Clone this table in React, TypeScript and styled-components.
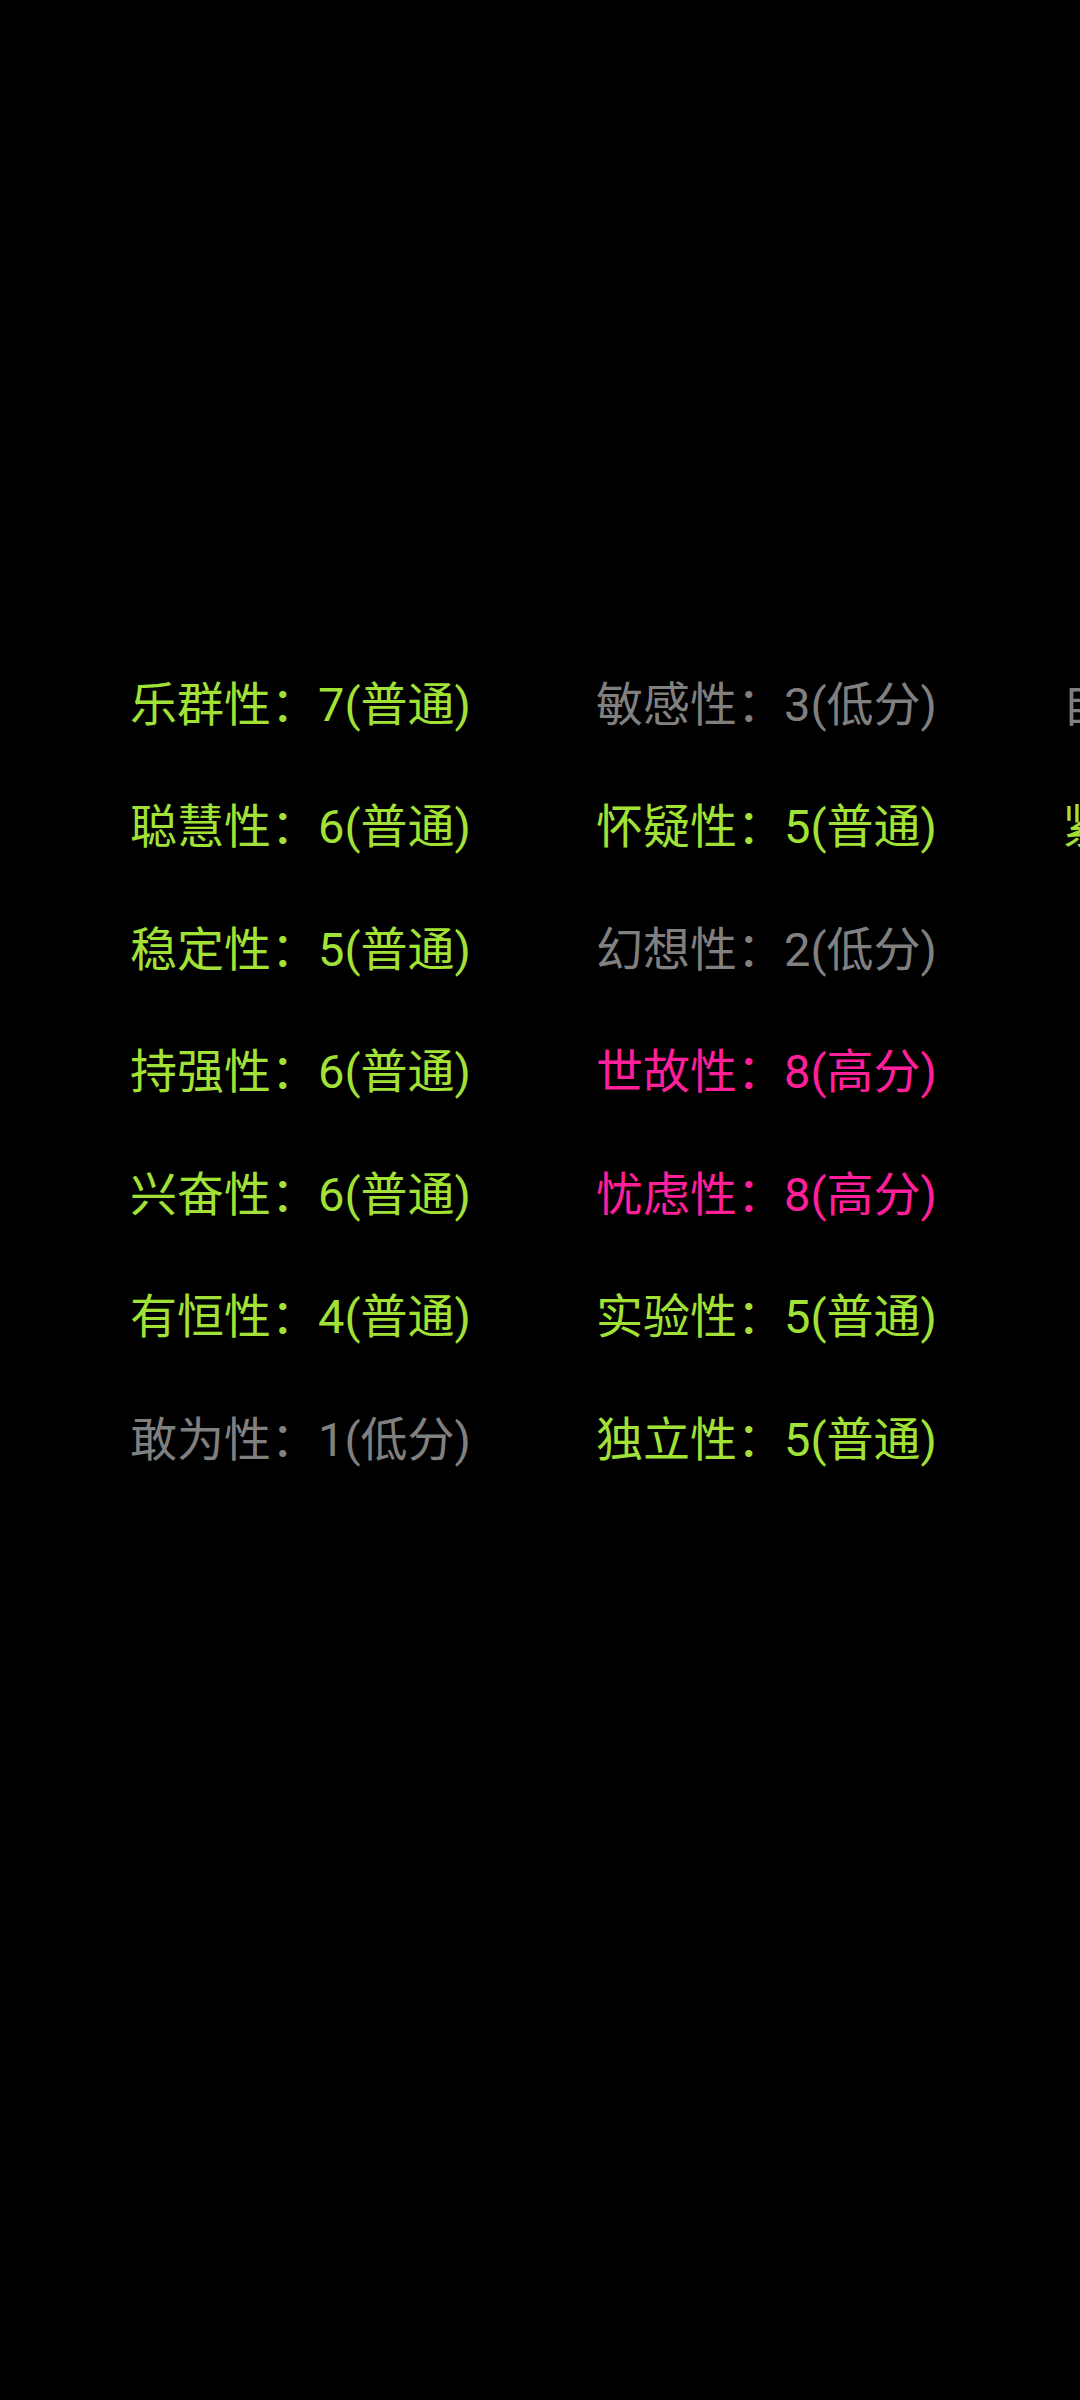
import React from "react";
import styled, { createGlobalStyle } from "styled-components";

const Global = createGlobalStyle`
  html, body {
    margin: 0;
    padding: 0;
    background: #000;
    overflow: hidden;
  }
  body {
    width: 1080px;
    height: 2400px;
  }
`;

type Level = "low" | "mid" | "high";

const colors: Record<Level, string> = {
  low: "#808080",
  mid: "#a2e236",
  high: "#ff1f9a",
};

const labels: Record<Level, string> = {
  low: "低分",
  mid: "普通",
  high: "高分",
};

const Page = styled.div`
  width: 1080px;
  height: 2400px;
  background: #000;
  overflow: hidden;
  box-sizing: border-box;
  padding: 639px 0 0 130px;
`;

const Columns = styled.div`
  display: flex;
  flex-direction: row;
  align-items: flex-start;
  width: max-content;
`;

const Column = styled.div`
  display: flex;
  flex-direction: column;
  width: 466px;
`;

const Row = styled.div<{ $level: Level }>`
  height: 122.5px;
  display: flex;
  align-items: center;
  white-space: nowrap;
  font-family: Roboto, "Noto Sans CJK SC", sans-serif;
  font-size: 47px;
  color: ${(p) => colors[p.$level]};
`;

type Item = { name: string; score: number; level: Level };

const columns: Item[][] = [
  [
    { name: "乐群性", score: 7, level: "mid" },
    { name: "聪慧性", score: 6, level: "mid" },
    { name: "稳定性", score: 5, level: "mid" },
    { name: "持强性", score: 6, level: "mid" },
    { name: "兴奋性", score: 6, level: "mid" },
    { name: "有恒性", score: 4, level: "mid" },
    { name: "敢为性", score: 1, level: "low" },
  ],
  [
    { name: "敏感性", score: 3, level: "low" },
    { name: "怀疑性", score: 5, level: "mid" },
    { name: "幻想性", score: 2, level: "low" },
    { name: "世故性", score: 8, level: "high" },
    { name: "忧虑性", score: 8, level: "high" },
    { name: "实验性", score: 5, level: "mid" },
    { name: "独立性", score: 5, level: "mid" },
  ],
  [
    { name: "自律性", score: 3, level: "low" },
    { name: "紧张性", score: 5, level: "mid" },
  ],
];

export default function App() {
  return (
    <Page>
      <Global />
      <Columns>
        {columns.map((col, ci) => (
          <Column key={ci}>
            {col.map((it) => (
              <Row key={it.name} $level={it.level}>
                {it.name}：{it.score}({labels[it.level]})
              </Row>
            ))}
          </Column>
        ))}
      </Columns>
    </Page>
  );
}
